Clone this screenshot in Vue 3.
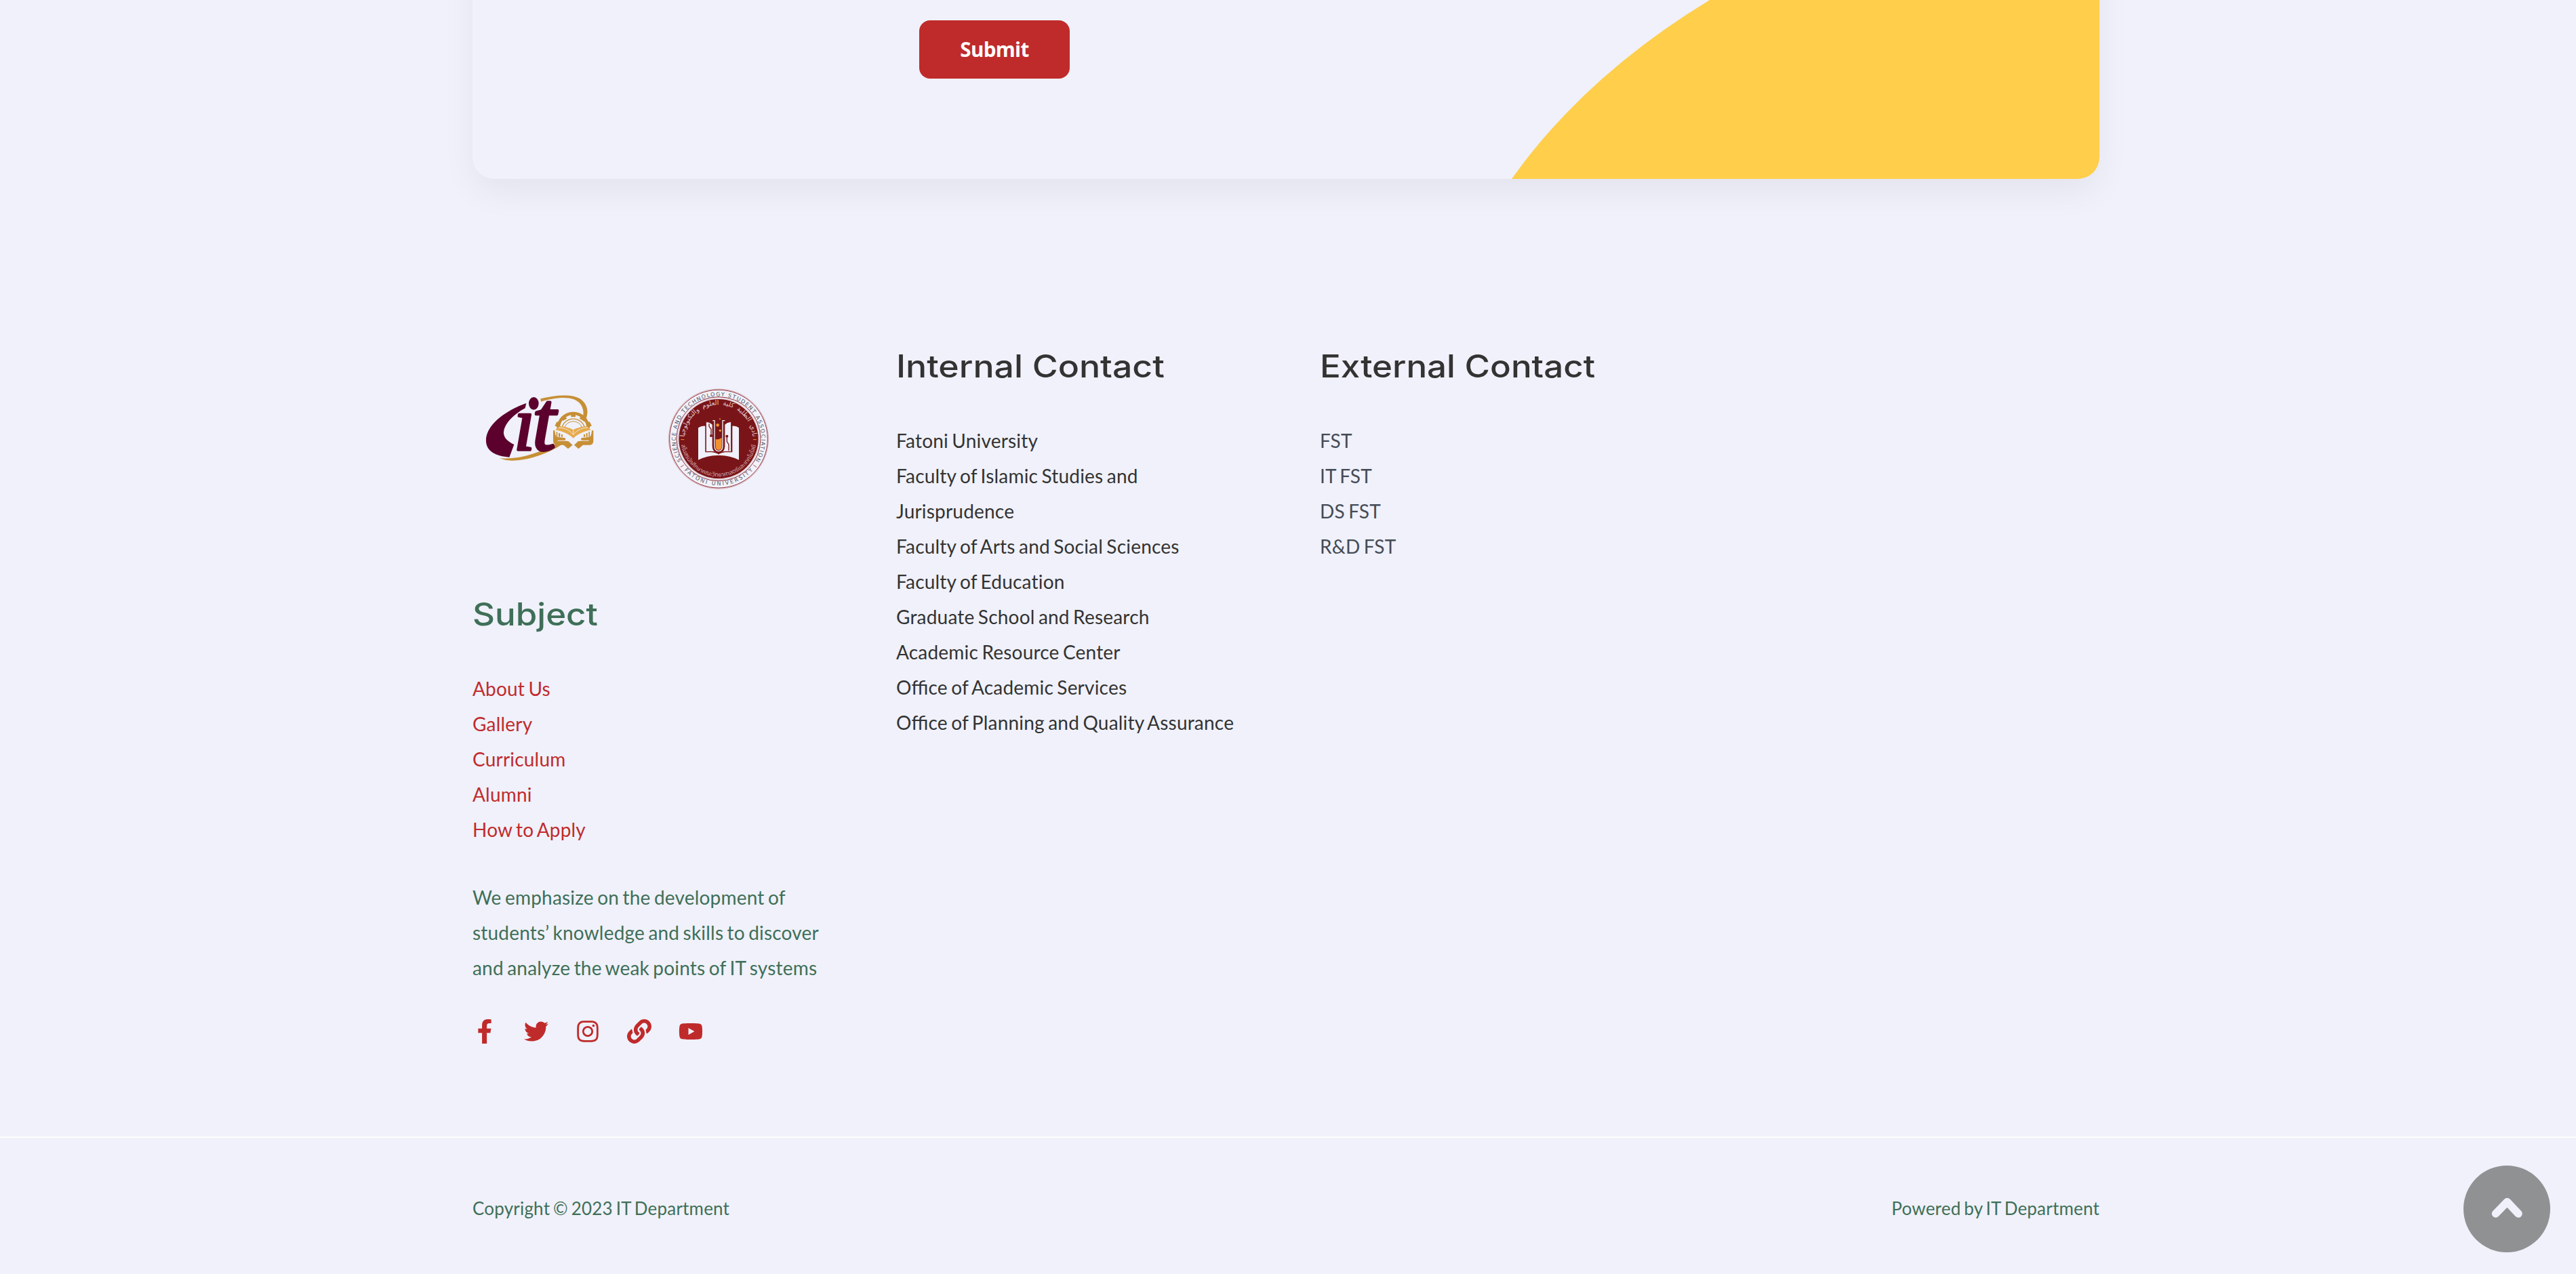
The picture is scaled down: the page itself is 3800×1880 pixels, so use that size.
<script setup>
const subjectLinks = ['About Us', 'Gallery', 'Curriculum', 'Alumni', 'How to Apply']
const internalLinks = [
  'Fatoni University',
  'Faculty of Islamic Studies and Jurisprudence',
  'Faculty of Arts and Social Sciences',
  'Faculty of Education',
  'Graduate School and Research',
  'Academic Resource Center',
  'Office of Academic Services',
  'Office of Planning and Quality Assurance',
]
const externalLinks = ['FST', 'IT FST', 'DS FST', 'R&D FST']

const socials = [
  {
    name: 'Facebook',
    box: '0 0 320 512',
    d: 'M279.14 288l14.22-92.66h-88.91v-60.13c0-25.35 12.42-50.06 52.24-50.06h40.42V6.26S260.43 0 225.36 0c-73.22 0-121.08 44.38-121.08 124.72v70.62H22.89V288h81.39v224h100.17V288z',
  },
  {
    name: 'Twitter',
    box: '0 0 512 512',
    d: 'M459.37 151.716c.325 4.548.325 9.097.325 13.645 0 138.72-105.583 298.558-298.558 298.558-59.452 0-114.68-17.219-161.137-47.106 8.447.974 16.568 1.299 25.34 1.299 49.055 0 94.213-16.568 130.274-44.832-46.132-.975-84.792-31.188-98.112-72.772 6.498.974 12.995 1.624 19.818 1.624 9.421 0 18.843-1.3 27.614-3.573-48.081-9.747-84.143-51.98-84.143-102.985v-1.299c13.969 7.797 30.214 12.67 47.431 13.319-28.264-18.843-46.781-51.005-46.781-87.391 0-19.492 5.197-37.36 14.294-52.954 51.655 63.675 129.3 105.258 216.365 109.807-1.624-7.797-2.599-15.918-2.599-24.04 0-57.828 46.782-104.934 104.934-104.934 30.213 0 57.502 12.67 76.67 33.137 23.715-4.548 46.456-13.32 66.599-25.34-7.798 24.366-24.366 44.833-46.132 57.827 21.117-2.273 41.584-8.122 60.426-16.243-14.292 20.791-32.161 39.308-52.628 54.253z',
  },
  {
    name: 'Instagram',
    box: '0 0 448 512',
    d: 'M224.1 141c-63.6 0-114.9 51.3-114.9 114.9s51.3 114.9 114.9 114.9S339 319.5 339 255.9 287.7 141 224.1 141zm0 189.6c-41.1 0-74.7-33.5-74.7-74.7s33.5-74.7 74.7-74.7 74.7 33.5 74.7 74.7-33.6 74.7-74.7 74.7zm146.4-194.3c0 14.9-12 26.8-26.8 26.8-14.9 0-26.8-12-26.8-26.8s12-26.8 26.8-26.8 26.8 12 26.8 26.8zm76.1 27.2c-1.7-35.9-9.9-67.7-36.2-93.9-26.2-26.2-58-34.4-93.9-36.2-37-2.1-147.9-2.1-184.9 0-35.8 1.7-67.6 9.9-93.9 36.1s-34.4 58-36.2 93.9c-2.1 37-2.1 147.9 0 184.9 1.7 35.9 9.9 67.7 36.2 93.9s58 34.4 93.9 36.2c37 2.1 147.9 2.1 184.9 0 35.9-1.7 67.7-9.9 93.9-36.2 26.2-26.2 34.4-58 36.2-93.9 2.1-37 2.1-147.8 0-184.8zM398.8 388c-7.8 19.6-22.9 34.7-42.6 42.6-29.5 11.7-99.5 9-132.1 9s-102.7 2.6-132.1-9c-19.6-7.8-34.7-22.9-42.6-42.6-11.7-29.5-9-99.5-9-132.1s-2.6-102.7 9-132.1c7.8-19.6 22.9-34.7 42.6-42.6 29.5-11.7 99.5-9 132.1-9s102.7-2.6 132.1 9c19.6 7.8 34.7 22.9 42.6 42.6 11.7 29.5 9 99.5 9 132.1s2.7 102.7-9 132.1z',
  },
  {
    name: 'Website',
    box: '0 0 512 512',
    d: 'M326.612 185.391c59.747 59.809 58.927 155.698.36 214.59-.11.12-.24.25-.36.37l-67.2 67.2c-59.27 59.27-155.699 59.262-214.96 0-59.27-59.26-59.27-155.7 0-214.96l37.106-37.106c9.84-9.84 26.786-3.3 27.294 10.606.648 17.722 3.826 35.527 9.69 52.721 1.986 5.822.567 12.262-3.783 16.612l-13.087 13.087c-28.026 28.026-28.905 73.66-1.155 101.96 28.024 28.579 74.086 28.749 102.325.51l67.2-67.19c28.191-28.191 28.073-73.757 0-101.83-3.701-3.694-7.429-6.564-10.341-8.569a16.037 16.037 0 0 1-6.947-12.606c-.396-10.567 3.348-21.456 11.698-29.806l21.054-21.055c5.521-5.521 14.182-6.199 20.584-1.731a152.482 152.482 0 0 1 20.522 17.197zM467.547 44.449c-59.261-59.262-155.69-59.27-214.96 0l-67.2 67.2c-.12.12-.25.25-.36.37-58.566 58.892-59.387 154.781.36 214.59a152.454 152.454 0 0 0 20.521 17.196c6.402 4.468 15.064 3.789 20.584-1.731l21.054-21.055c8.35-8.35 12.094-19.239 11.698-29.806a16.037 16.037 0 0 0-6.947-12.606c-2.912-2.005-6.64-4.875-10.341-8.569-28.073-28.073-28.191-73.639 0-101.83l67.2-67.19c28.239-28.239 74.3-28.069 102.325.51 27.75 28.3 26.872 73.934-1.155 101.96l-13.087 13.087c-4.35 4.35-5.769 10.79-3.783 16.612 5.864 17.194 9.042 34.999 9.69 52.721.509 13.906 17.454 20.446 27.294 10.606l37.106-37.106c59.271-59.259 59.271-155.699.001-214.959z',
  },
  {
    name: 'YouTube',
    box: '0 0 576 512',
    d: 'M549.655 124.083c-6.281-23.65-24.787-42.276-48.284-48.597C458.781 64 288 64 288 64S117.22 64 74.629 75.486c-23.497 6.322-42.003 24.947-48.284 48.597-11.412 42.867-11.412 132.305-11.412 132.305s0 89.438 11.412 132.305c6.281 23.65 24.787 41.5 48.284 47.821C117.22 448 288 448 288 448s170.78 0 213.371-11.486c23.497-6.321 42.003-24.171 48.284-47.821 11.412-42.867 11.412-132.305 11.412-132.305s0-89.438-11.412-132.305zm-317.51 213.508V175.185l142.739 81.205-142.739 81.201z',
  },
]
</script>

<template>
  <div class="page">
    <section class="card">
      <svg class="card-shape" viewBox="0 0 867 264" aria-hidden="true">
        <path d="M0 264 Q108 112 292 0 H867 V264 Z" />
      </svg>
      <button class="submit" type="button">Submit</button>
    </section>

    <footer>
      <div class="columns">
        <div class="col col-brand">
          <div class="logos">
            <svg class="logo-it" viewBox="51 0 669 450" role="img" aria-label="IT">
              <!-- golden orbit -->
              <path
                fill="#c78f35"
                d="M352 85 C410 70 485 62 525 84 C562 107 570 150 546 188 L538 180 C548 140 540 105 500 88 C460 74 400 84 354 98 Z"
              />
              <path
                fill="#c78f35"
                d="M172 348 C240 356 330 334 412 288 L446 288 C380 332 290 360 225 359 C200 358 185 354 172 348 Z"
              />
              <!-- crescent and dot -->
              <path
                fill="#5c002d"
                d="M289 105 C190 140 108 205 111 274 C113 318 155 340 214 344 L235 288 C205 274 188 256 189 234 C191 195 232 155 284 127 Z"
              />
              <ellipse cx="322" cy="106" rx="22" ry="28" fill="#5c002d" />
              <text class="logo-letters" transform="translate(234 311)">ı</text>
              <text class="logo-letters" transform="translate(316 311) scale(1.1 1.1)">t</text>
              <!-- gear -->
              <g fill="none" stroke="#c78f35">
                <path d="M431 216 A66 66 0 0 1 563 216" stroke-width="14" />
                <path d="M446 216 A52 52 0 0 1 548 216" stroke-width="4" />
                <path d="M458 212 A42 42 0 0 1 536 212" stroke-width="3" />
                <path
                  d="M497 166 V153 M460 178 L453 166 M533 178 L540 166 M434 203 L420 196 M560 203 L574 196"
                  stroke-width="20"
                />
              </g>
              <!-- bars behind the book -->
              <path
                fill="#c78f35"
                d="M422 232h5v22h-5z M432 238h7v16h-7z M444 243h6v11h-6z M543 243h6v11h-6z M554 238h6v16h-6z M565 232h5v22h-5z"
              />
              <!-- open book -->
              <path fill="#e6ab4c" d="M437 207 C460 208 482 214 497 223 C512 214 534 208 557 207 L575 223 C545 230 515 242 497 260 C480 242 450 230 417 223 Z" />
              <path fill="none" stroke="#f0f1fa" stroke-width="2.5" d="M431 213 C458 213 480 224 497 244 C514 224 536 213 563 213 M497 224 V244" />
              <!-- hands -->
              <path
                fill="#c78f35"
                d="M408 226 H415 Q417 250 424 254 L460 259 Q466 264 460 269 H430 L426 272 L468 272 L476 274 L494 290 L474 307 L454 290 H424 Q408 288 408 272 Z"
              />
              <path
                fill="#c78f35"
                d="M586 226 H579 Q577 250 570 254 L534 259 Q528 264 534 269 H564 L568 272 L526 272 L518 274 L501 290 L520 307 L540 290 H570 Q586 288 586 272 Z"
              />
            </svg>

            <svg class="logo-seal" viewBox="0 0 600 600" role="img" aria-label="Science and Technology Student Association, Fatoni University">
              <defs>
                <path id="seal-top-outer" d="M165.6 427.4 A190 190 0 1 1 434.4 427.4" />
                <path id="seal-bottom-outer" d="M94 293 A206 206 0 0 0 506 293" />
                <path id="seal-arabic" d="M149 293 A151 151 0 0 1 451 293" />
                <path id="seal-thai" d="M133 293 A167 167 0 0 0 467 293" />
              </defs>
              <circle cx="300" cy="293" r="221" fill="#f4eff6" stroke="#d8b4bb" stroke-width="3" />
              <circle cx="300" cy="293" r="217" fill="#f3f2fa" stroke="#8a2c36" stroke-width="3" />
              <circle cx="300" cy="293" r="186" fill="#f3f2fa" stroke="#8a2c36" stroke-width="3" />
              <circle cx="300" cy="293" r="180" fill="#f3f2fa" stroke="#d8b4bb" stroke-width="2" />
              <circle cx="300" cy="293" r="176" fill="#791518" />
              <text class="seal-latin">
                <textPath href="#seal-top-outer" startOffset="50%" text-anchor="middle" textLength="800">SCIENCE AND TECHNOLOGY STUDENT ASSOCIATION</textPath>
              </text>
              <text class="seal-latin">
                <textPath href="#seal-bottom-outer" startOffset="50%" text-anchor="middle" textLength="342">FATONI UNIVERSITY</textPath>
              </text>
              <path d="M132 418 L146 408 M468 418 L454 408" stroke="#c58a90" stroke-width="4" />
              <text class="seal-arabic">
                <textPath href="#seal-arabic" startOffset="50%" text-anchor="middle">نادي الطلبة كلية العلوم والتكنولوجيا</textPath>
              </text>
              <text class="seal-thai">
                <textPath href="#seal-thai" startOffset="50%" text-anchor="middle">สโมสรนักศึกษาคณะวิทยาศาสตร์และเทคโนโลยี</textPath>
              </text>
              <path d="M133 296 H148 M453 296 H468" stroke="#f2922f" stroke-width="3" />
              <!-- book -->
              <path
                fill="#f0f1fa"
                d="M210 244 Q224 234 241 236 V352 H270 Q290 354 300 362 Q310 354 330 352 H361 V236 Q378 234 390 244 V386 Q345 364 300 366 Q255 364 210 386 Z"
              />
              <path fill="#f0f1fa" stroke="#791518" stroke-width="3" d="M244 218 Q262 216 280 236 V330 L296 354 Q270 346 244 350 Z" />
              <path fill="#f0f1fa" stroke="#791518" stroke-width="3" d="M356 218 Q338 216 320 236 V330 L304 354 Q330 346 356 350 Z" />
              <g fill="none" stroke="#791518" stroke-width="4">
                <path d="M258 226 V238 L267 250 V278" />
                <path d="M337 282 V305 L345 318 V346" />
              </g>
              <circle cx="267" cy="279" r="6" fill="#791518" />
              <circle cx="337" cy="281" r="6" fill="#791518" />
              <!-- test tube -->
              <path fill="#791518" d="M272 208 H328 V326 Q326 356 300 356 Q274 356 272 326 Z" />
              <path fill="none" stroke="#f0f1fa" stroke-width="4" d="M274 212 H282 V325 Q283 347 300 347 Q317 347 318 325 V212 H328" />
              <path fill="#f2922f" d="M287 294 Q300 298 314 288 V326 Q313 342 300 342 Q288 342 287 326 Z" />
              <circle cx="296" cy="232" r="7" fill="#f2922f" />
              <circle cx="307" cy="256" r="5" fill="#f2922f" />
              <circle cx="306" cy="205" r="3" fill="#f2922f" />
            </svg>
          </div>

          <h2 class="subject-title">Subject</h2>
          <ul class="links red">
            <li v-for="l in subjectLinks" :key="l"><a>{{ l }}</a></li>
          </ul>
          <p class="about">
            We emphasize on the development of students’ knowledge and skills to discover and analyze the weak points of IT systems
          </p>
          <div class="socials">
            <svg v-for="s in socials" :key="s.name" :viewBox="s.box" role="img" :aria-label="s.name">
              <path :d="s.d" />
            </svg>
          </div>
        </div>

        <div class="col">
          <h2 class="internal-title">Internal Contact</h2>
          <ul class="links">
            <li v-for="l in internalLinks" :key="l" :class="{ ligatures: l.includes('ffi') }"><a>{{ l }}</a></li>
          </ul>
        </div>

        <div class="col">
          <h2 class="external-title">External Contact</h2>
          <ul class="links slate">
            <li v-for="l in externalLinks" :key="l"><a>{{ l }}</a></li>
          </ul>
        </div>
      </div>

      <div class="bottom-bar">
        <div class="bottom-inner">
          <span>Copyright © 2023 IT Department</span>
          <span>Powered by IT Department</span>
        </div>
      </div>
    </footer>

    <button class="to-top" type="button" aria-label="Back to top">
      <svg viewBox="0 0 128 128"><path d="M47.5 71 L64.5 53.5 L81 71" /></svg>
    </button>
  </div>
</template>

<style>
html,
body {
  margin: 0;
  background: #f0f1fa;
}
</style>

<style scoped>
.page {
  position: relative;
  display: flow-root;
  height: 1880px;
  overflow: hidden;
  background: #f0f1fa;
  font-family: Lato, 'Liberation Sans', sans-serif;
  font-size: 28px;
  line-height: 52px;
  letter-spacing: 0.2px;
  word-spacing: -2px;
  color: #333;
}

/* The card starts above the visible area */
.card {
  position: relative;
  box-sizing: border-box;
  width: 2400px;
  height: 464px;
  margin: -200px 0 0 697px;
  padding: 230px 0 0 659px;
  border-radius: 32px;
  background: #f0f1fa;
  box-shadow: 0 20px 50px rgba(0, 0, 0, 0.055);
}

.card-shape {
  position: absolute;
  right: 0;
  bottom: 0;
  width: 867px;
  height: 264px;
  border-bottom-right-radius: 32px;
  fill: #ffce4b;
}

.submit {
  display: block;
  width: 222px;
  height: 86px;
  padding: 0;
  border: 0;
  border-radius: 16px;
  background: #bf2b2b;
  color: #fff;
  font: 700 29.5px/86px 'Open Sans', sans-serif;
  letter-spacing: -0.6px;
}

.columns {
  display: grid;
  grid-template-columns: repeat(4, 525px);
  column-gap: 100px;
  box-sizing: border-box;
  width: 2400px;
  height: 1413px;
  margin-left: 697px;
  padding-top: 246px;
}

.logos {
  display: flex;
  align-items: flex-start;
  gap: 40px;
  height: 200px;
  padding-top: 40px;
  margin-bottom: 126px;
  letter-spacing: 0;
  word-spacing: 0;
}

.logo-it {
  flex: none;
  width: 223px;
  height: 150px;
  margin-top: 10px;
  overflow: visible;
}

.logo-seal {
  flex: none;
  width: 200px;
  height: 200px;
}

.logo-letters {
  font: italic 400 340px 'Liberation Serif', serif;
  fill: #5c002d;
  stroke: #5c002d;
  stroke-width: 11;
  stroke-linejoin: round;
}

.seal-latin {
  font: 400 24px 'DejaVu Sans', sans-serif;
  fill: #4b5560;
}

.seal-arabic {
  font: 400 29px 'DejaVu Sans', sans-serif;
  word-spacing: 8px;
  fill: #e3c8cc;
}

.seal-thai {
  font: 400 26px 'Noto Sans Thai', 'Noto Sans', sans-serif;
  fill: #d3a9ad;
}

h2 {
  height: 60px;
  margin: 0 0 54px;
  font: 450 46px/60px Inter, sans-serif;
  letter-spacing: 0;
  word-spacing: 0;
  white-space: nowrap;
  transform: scaleX(1.11);
  transform-origin: 0 0;
}

.internal-title {
  transform: scaleX(1.125);
}

.subject-title {
  color: #3f6f58;
}

.links {
  margin: 0;
  padding: 0;
  list-style: none;
}

.ligatures {
  font-feature-settings: 'liga' 1;
}

.red {
  color: #c02b2c;
}

.slate {
  color: #454b55;
}

.about {
  margin: 48px 0 50px;
  color: #3f6f58;
}

.socials {
  display: flex;
  gap: 40px;
}

.socials svg {
  width: 36px;
  height: 36px;
  fill: #bf2b2b;
}

.bottom-bar {
  border-top: 2px solid #fff;
}

.bottom-inner {
  display: flex;
  justify-content: space-between;
  width: 2400px;
  margin-left: 697px;
  padding-top: 78px;
  font-size: 26px;
  color: #3f6f58;
}

.to-top {
  position: absolute;
  left: 3634px;
  top: 1720px;
  width: 128px;
  height: 128px;
  padding: 0;
  border: 0;
  border-radius: 50%;
  background: #909193;
}

.to-top svg {
  display: block;
  fill: none;
  stroke: #f0f1fa;
  stroke-width: 11.5;
  stroke-linecap: round;
  stroke-linejoin: round;
}
</style>
